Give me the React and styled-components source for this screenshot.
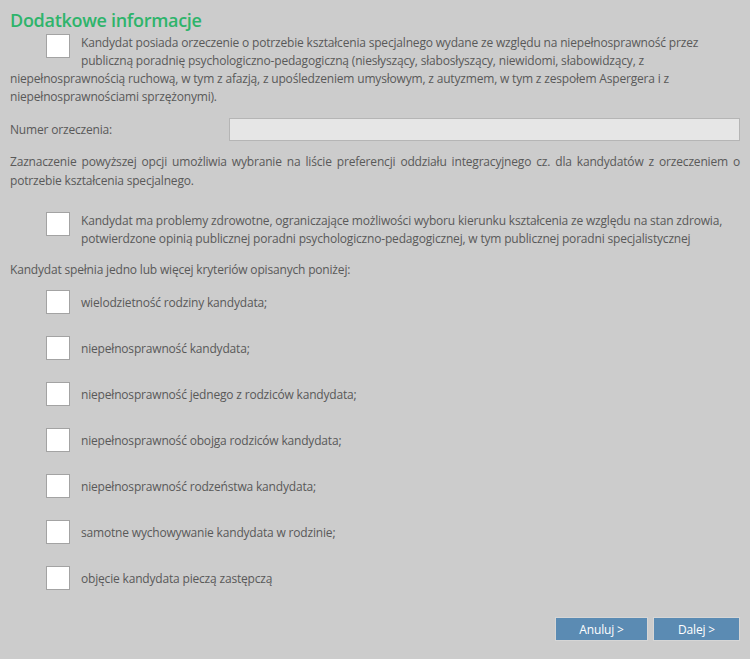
import React, { useState } from "react";
import styled, { createGlobalStyle } from "styled-components";

const Global = createGlobalStyle`
  html, body {
    margin: 0;
    padding: 0;
    background: #cccccc;
  }
  body {
    font-family: "Open Sans", "Liberation Sans", sans-serif;
    font-size: 12px;
    letter-spacing: -0.18px;
    color: #595959;
  }
`;

const Page = styled.div`
  width: 750px;
  height: 659px;
  box-sizing: border-box;
  padding: 8px 10px 0 10px;
`;

const Title = styled.h2`
  margin: 0;
  font-size: 18px;
  font-weight: 600;
  line-height: 24px;
  letter-spacing: -0.3px;
  color: #2eb46b;
`;

const CheckRow = styled.label`
  display: block;
  line-height: 18px;
  margin-top: ${(p) => p.$top || 0}px;
  cursor: pointer;
  &:after {
    content: "";
    display: table;
    clear: both;
  }
`;

const Box = styled.span`
  float: left;
  width: 22px;
  height: 22px;
  margin: 0 11px 0 36px;
  background: #ffffff;
  border: 1px solid #a3a3a3;
  position: relative;
  input {
    position: absolute;
    opacity: 0;
    width: 0;
    height: 0;
  }
  &:after {
    content: "";
    display: ${(p) => (p.$checked ? "block" : "none")};
    position: absolute;
    left: 7px;
    top: 2px;
    width: 5px;
    height: 11px;
    border: solid #2eb46b;
    border-width: 0 3px 3px 0;
    transform: rotate(45deg);
  }
`;

const Text = styled.span`
  display: block;
`;

const FieldRow = styled.div`
  display: flex;
  align-items: center;
  margin-top: 12px;
`;

const Label = styled.label`
  width: 219px;
  flex: none;
`;

const Input = styled.input`
  flex: 1;
  height: 23px;
  box-sizing: border-box;
  border: 1px solid #b5b5b5;
  background: #e6e6e6;
  font: inherit;
  color: #555;
  outline: none;
`;

const Note = styled.p`
  margin: 11px 0 0 0;
  line-height: 19px;
  text-align: justify;
`;

const Plain = styled.p`
  margin: 13px 0 0 0;
  line-height: 18px;
`;

const List = styled.div`
  display: flex;
  flex-direction: column;
  gap: 22px;
  margin-top: 11px;
`;

const ItemRow = styled.label`
  display: flex;
  align-items: center;
  height: 24px;
  cursor: pointer;
`;

const ItemBox = styled(Box)`
  float: none;
  flex: none;
`;

const Footer = styled.div`
  display: flex;
  justify-content: flex-end;
  gap: 5px;
  margin-top: 27px;
`;

const Button = styled.button`
  width: ${(p) => p.$w}px;
  height: 24px;
  border: 1px solid #d6d6d6;
  background: #5b8bb3;
  color: #ffffff;
  font-family: "Open Sans", "Liberation Sans", sans-serif;
  font-size: 12px;
  letter-spacing: -0.18px;
  padding: 0;
  cursor: pointer;
  &:hover {
    background: #6b9bc3;
  }
`;

const criteria = [
  "wielodzietność rodziny kandydata;",
  "niepełnosprawność kandydata;",
  "niepełnosprawność jednego z rodziców kandydata;",
  "niepełnosprawność obojga rodziców kandydata;",
  "niepełnosprawność rodzeństwa kandydata;",
  "samotne wychowywanie kandydata w rodzinie;",
  "objęcie kandydata pieczą zastępczą",
];

const Check = ({ checked, onChange }) => (
  <Box $checked={checked}>
    <input type="checkbox" checked={checked} onChange={onChange} />
  </Box>
);

const App = () => {
  const [special, setSpecial] = useState(false);
  const [health, setHealth] = useState(false);
  const [number, setNumber] = useState("");
  const [picked, setPicked] = useState(criteria.map(() => false));

  const toggle = (i) =>
    setPicked(picked.map((v, j) => (j === i ? !v : v)));

  return (
    <Page>
      <Global />
      <Title>Dodatkowe informacje</Title>

      <CheckRow $top={2}>
        <Check checked={special} onChange={() => setSpecial(!special)} />
        <Text>
          Kandydat posiada orzeczenie o potrzebie kształcenia specjalnego wydane ze względu na
          niepełnosprawność przez publiczną poradnię psychologiczno-pedagogiczną (niesłyszący,
          słabosłyszący, niewidomi, słabowidzący, z niepełnosprawnością ruchową, w tym z afazją, z
          upośledzeniem umysłowym, z autyzmem, w tym z zespołem Aspergera i z
          niepełnosprawnościami sprzężonymi).
        </Text>
      </CheckRow>

      <FieldRow>
        <Label htmlFor="nr">Numer orzeczenia:</Label>
        <Input id="nr" value={number} onChange={(e) => setNumber(e.target.value)} />
      </FieldRow>

      <Note>
        Zaznaczenie powyższej opcji umożliwia wybranie na liście preferencji oddziału
        integracyjnego cz. dla kandydatów z orzeczeniem o potrzebie kształcenia specjalnego.
      </Note>

      <CheckRow $top={22}>
        <Check checked={health} onChange={() => setHealth(!health)} />
        <Text>
          Kandydat ma problemy zdrowotne, ograniczające możliwości wyboru kierunku kształcenia ze
          względu na stan zdrowia, potwierdzone opinią publicznej poradni
          psychologiczno-pedagogicznej, w tym publicznej poradni specjalistycznej
        </Text>
      </CheckRow>

      <Plain>Kandydat spełnia jedno lub więcej kryteriów opisanych poniżej:</Plain>

      <List>
        {criteria.map((c, i) => (
          <ItemRow key={c}>
            <ItemBox $checked={picked[i]}>
              <input type="checkbox" checked={picked[i]} onChange={() => toggle(i)} />
            </ItemBox>
            <span>{c}</span>
          </ItemRow>
        ))}
      </List>

      <Footer>
        <Button $w={93}>Anuluj &gt;</Button>
        <Button $w={87}>Dalej &gt;</Button>
      </Footer>
    </Page>
  );
};

export default App;
